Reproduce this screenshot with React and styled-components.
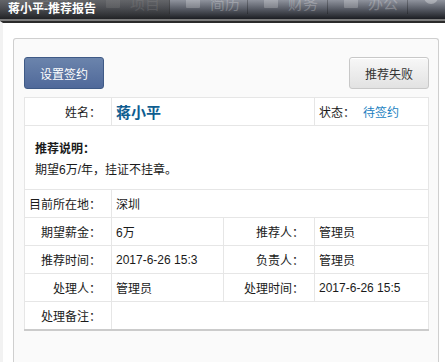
import React from 'react';
import styled, { createGlobalStyle } from 'styled-components';

const GlobalStyle = createGlobalStyle`
  html, body {
    margin: 0;
    padding: 0;
    background: #fff;
  }
  body {
    font-family: "Liberation Sans", "Noto Sans CJK SC", sans-serif;
    font-size: 12px;
    color: #1a1a1a;
  }
`;

const tabs = [
  { label: '首页', width: 90 },
  { label: '项目', width: 80 },
  { label: '简历', width: 78 },
  { label: '财务', width: 80 },
  { label: '办公', width: 80 },
];

const TabIcon = () => (
  <svg width="14" height="12" viewBox="0 0 14 12">
    <rect x="0" y="0" width="14" height="12" rx="1" fill="rgba(255,255,255,0.22)" />
  </svg>
);

const App = () => {
  return (
    <>
      <GlobalStyle />
      <Header>
        <Nav>
          {tabs.map((t) => (
            <Tab key={t.label} $width={t.width}>
              <TabIcon />
              <span>{t.label}</span>
            </Tab>
          ))}
          <Dot />
        </Nav>
        <Title>蒋小平-推荐报告</Title>
      </Header>
      <Page>
        <Panel>
          <Toolbar>
            <Button $primary>设置签约</Button>
            <Button>推荐失败</Button>
          </Toolbar>
          <Table>
            <colgroup>
              <col style={{ width: 87 }} />
              <col style={{ width: 112 }} />
              <col style={{ width: 91 }} />
              <col />
            </colgroup>
            <tbody>
              <Row>
                <Label>姓名：</Label>
                <Value colSpan={2}>
                  <Name>蒋小平</Name>
                </Value>
                <Value $pad={4}>
                  状态：<Status>待签约</Status>
                </Value>
              </Row>
              <tr>
                <Note colSpan={4}>
                  <NoteTitle>推荐说明：</NoteTitle>
                  <div>期望6万/年，挂证不挂章。</div>
                </Note>
              </tr>
              <Row>
                <Label>目前所在地：</Label>
                <Value colSpan={3}>深圳</Value>
              </Row>
              <Row>
                <Label>期望薪金：</Label>
                <Value>6万</Value>
                <Label>推荐人：</Label>
                <Value>管理员</Value>
              </Row>
              <Row>
                <Label>推荐时间：</Label>
                <Value>2017-6-26 15:3</Value>
                <Label>负责人：</Label>
                <Value>管理员</Value>
              </Row>
              <Row>
                <Label>处理人：</Label>
                <Value>管理员</Value>
                <Label>处理时间：</Label>
                <Value>2017-6-26 15:5</Value>
              </Row>
              <Row>
                <Label>处理备注：</Label>
                <Value colSpan={3}></Value>
              </Row>
            </tbody>
          </Table>
        </Panel>
      </Page>
    </>
  );
};

export default App;

const Header = styled.div`
  position: relative;
  height: 19px;
  overflow: hidden;
  background: linear-gradient(#8f939d, #5a5e68 45%, #1c1e23);
  border-bottom: 2px solid #7d7d7d;
`;

const Nav = styled.div`
  display: flex;
  margin-top: -10px;
`;

const Tab = styled.div`
  display: flex;
  align-items: center;
  gap: 10px;
  box-sizing: border-box;
  width: ${(p) => p.$width}px;
  height: 24px;
  padding-left: 16px;
  border-right: 1px solid rgba(0, 0, 0, 0.25);
  color: rgba(255, 255, 255, 0.25);
  font-size: 15px;
`;

const Dot = styled.div`
  width: 14px;
  height: 14px;
  margin: 0 0 0 16px;
  border-radius: 50%;
  background: rgba(255, 255, 255, 0.3);
`;

const Title = styled.div`
  position: absolute;
  left: 0;
  top: 0;
  width: 162px;
  height: 19px;
  padding-left: 8px;
  line-height: 19px;
  background: linear-gradient(rgba(70, 70, 70, 0.6), rgba(40, 40, 40, 0.45));
  color: #fff;
  font-weight: bold;
  font-size: 12px;
`;

const Page = styled.div`
  box-sizing: border-box;
  height: 341px;
  overflow: hidden;
  border-top: 2px solid #2b2b2b;
  border-left: 3px solid #f2f2f2;
  padding: 15px 6px 0 10px;
`;

const Panel = styled.div`
  box-sizing: border-box;
  height: 100%;
  padding: 18px 9px 0 10px;
  background: #fafafa;
  border: 1px solid #cfcfcf;
  border-bottom: none;
  border-radius: 3px 3px 0 0;
`;

const Toolbar = styled.div`
  display: flex;
  justify-content: space-between;
  margin-bottom: 8px;
`;

const Button = styled.button`
  box-sizing: border-box;
  width: 80px;
  height: 32px;
  padding: 0;
  border-radius: 3px;
  font-family: "Liberation Sans", "Noto Sans CJK SC", sans-serif;
  font-size: 12px;
  cursor: pointer;
  color: ${(p) => (p.$primary ? '#fff' : '#333')};
  background: ${(p) =>
    p.$primary
      ? 'linear-gradient(#6b84ac, #50699a)'
      : 'linear-gradient(#f7f7f7, #e2e2e2)'};
  border: 1px solid ${(p) => (p.$primary ? '#3f5a86' : '#c8c8c8')};
  box-shadow: ${(p) => (p.$primary ? 'none' : 'inset 0 1px 0 #fff')};
`;

const Table = styled.table`
  width: 100%;
  table-layout: fixed;
  border-collapse: collapse;
  background: #fff;
  border: 1px solid #d9d9d9;
  border-bottom: 2px solid #cbcbcb;
`;

const Row = styled.tr`
  height: 28px;
`;

const Label = styled.td`
  padding: 0 10px 0 0;
  text-align: right;
  border: 1px solid #e6e6e6;
  white-space: nowrap;
`;

const Value = styled.td`
  padding: 0 0 0 ${(p) => p.$pad ?? 4}px;
  border: 1px solid #e6e6e6;
  white-space: nowrap;
  overflow: hidden;
`;

const Name = styled.span`
  color: #0e5d90;
  font-weight: bold;
  font-size: 15px;
`;

const Status = styled.span`
  margin-left: 8px;
  color: #1b7fc1;
`;

const Note = styled.td`
  padding: 13px 10px 8px;
  line-height: 21px;
  border: 1px solid #e6e6e6;
`;

const NoteTitle = styled.div`
  font-weight: bold;
`;
